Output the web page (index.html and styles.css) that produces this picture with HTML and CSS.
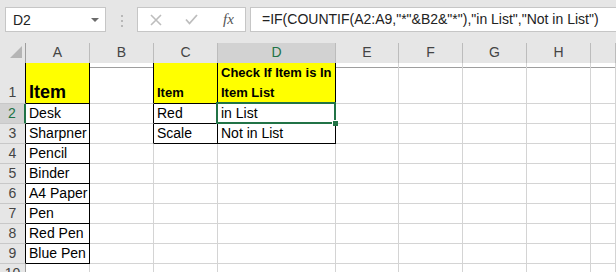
FILE: index.html
```html
<!DOCTYPE html>
<html lang="en">
<head>
    <meta charset="UTF-8">
    <title>COUNTIF Check</title>
    <link rel="stylesheet" href="styles.css">
</head>
<body>
    <div class="toolbar">
        <div class="namebox">
            <span>D2</span>
            <svg class="caret" width="8" height="4" viewBox="0 0 8 4"><path d="M0 0H8L4 4Z" fill="#6b6b6b"/></svg>
        </div>
        <svg class="grip" width="3" height="12" viewBox="0 0 3 12">
            <rect x="0" y="0" width="2" height="2" fill="#b8b8b8"/>
            <rect x="0" y="5" width="2" height="2" fill="#b8b8b8"/>
            <rect x="0" y="10" width="2" height="2" fill="#b8b8b8"/>
        </svg>
        <div class="fxbtns">
            <svg width="12" height="12" viewBox="0 0 12 12"><path d="M1 1L11 11M11 1L1 11" stroke="#bdbdbd" stroke-width="1.6" fill="none"/></svg>
            <svg width="13" height="11" viewBox="0 0 13 11"><path d="M1 5.5L4.5 9.5L12 1" stroke="#bdbdbd" stroke-width="1.8" fill="none"/></svg>
            <span class="fx">fx</span>
        </div>
        <div class="formula">=IF(COUNTIF(A2:A9,"*"&amp;B2&amp;"*"),"in List","Not in List")</div>
    </div>

    <div class="sheet">
        <div class="row head">
            <div class="rh corner">
                <svg width="25" height="19" viewBox="0 0 25 19"><path d="M22 3V15H10Z" fill="#b5b5b5"/></svg>
            </div>
            <div class="ch">A</div>
            <div class="ch">B</div>
            <div class="ch">C</div>
            <div class="ch sel">D</div>
            <div class="ch">E</div>
            <div class="ch">F</div>
            <div class="ch">G</div>
            <div class="ch">H</div>
            <div class="ch"></div>
        </div>

        <div class="row r1">
            <div class="rh edge">1</div>
            <div class="c boxed yellow big">Item</div>
            <div class="c before"></div>
            <div class="c boxed yellow bold">Item</div>
            <div class="c boxed yellow bold">Check If Item is In<br>Item List</div>
            <div class="c"></div>
            <div class="c"></div>
            <div class="c"></div>
            <div class="c"></div>
            <div class="c"></div>
        </div>

        <div class="row">
            <div class="rh active">2</div>
            <div class="c boxed">Desk</div>
            <div class="c before"></div>
            <div class="c boxed">Red</div>
            <div class="c boxed current">in List<span class="selbox"><span class="handle"></span></span></div>
            <div class="c"></div>
            <div class="c"></div>
            <div class="c"></div>
            <div class="c"></div>
            <div class="c"></div>
        </div>

        <div class="row">
            <div class="rh edge">3</div>
            <div class="c boxed">Sharpner</div>
            <div class="c before"></div>
            <div class="c boxed">Scale</div>
            <div class="c boxed">Not in List</div>
            <div class="c"></div>
            <div class="c"></div>
            <div class="c"></div>
            <div class="c"></div>
            <div class="c"></div>
        </div>

        <div class="row">
            <div class="rh edge">4</div>
            <div class="c boxed">Pencil</div>
            <div class="c"></div><div class="c"></div><div class="c"></div><div class="c"></div>
            <div class="c"></div><div class="c"></div><div class="c"></div><div class="c"></div>
        </div>
        <div class="row">
            <div class="rh edge">5</div>
            <div class="c boxed">Binder</div>
            <div class="c"></div><div class="c"></div><div class="c"></div><div class="c"></div>
            <div class="c"></div><div class="c"></div><div class="c"></div><div class="c"></div>
        </div>
        <div class="row">
            <div class="rh edge">6</div>
            <div class="c boxed">A4 Paper</div>
            <div class="c"></div><div class="c"></div><div class="c"></div><div class="c"></div>
            <div class="c"></div><div class="c"></div><div class="c"></div><div class="c"></div>
        </div>
        <div class="row">
            <div class="rh edge">7</div>
            <div class="c boxed">Pen</div>
            <div class="c"></div><div class="c"></div><div class="c"></div><div class="c"></div>
            <div class="c"></div><div class="c"></div><div class="c"></div><div class="c"></div>
        </div>
        <div class="row">
            <div class="rh edge">8</div>
            <div class="c boxed">Red Pen</div>
            <div class="c"></div><div class="c"></div><div class="c"></div><div class="c"></div>
            <div class="c"></div><div class="c"></div><div class="c"></div><div class="c"></div>
        </div>
        <div class="row">
            <div class="rh edge">9</div>
            <div class="c boxed">Blue Pen</div>
            <div class="c"></div><div class="c"></div><div class="c"></div><div class="c"></div>
            <div class="c"></div><div class="c"></div><div class="c"></div><div class="c"></div>
        </div>
        <div class="row">
            <div class="rh">10</div>
            <div class="c"></div><div class="c"></div><div class="c"></div><div class="c"></div><div class="c"></div>
            <div class="c"></div><div class="c"></div><div class="c"></div><div class="c"></div>
        </div>
    </div>
</body>
</html>
```

FILE: styles.css
```css
body {
    margin: 0;
    background: #fff;
    font-family: "Liberation Sans", Arial, sans-serif;
    overflow: hidden;
}

/* formula bar */
.toolbar {
    height: 43px;
    background: #e6e6e6;
    display: flex;
    align-items: flex-start;
    padding: 7px 0 0 5px;
    box-sizing: border-box;
}

.namebox {
    width: 101px;
    height: 25px;
    box-sizing: border-box;
    background: #fff;
    border: 1px solid #c6c6c6;
    display: flex;
    align-items: center;
    justify-content: space-between;
    padding: 0 6px 0 7px;
    font-size: 14px;
    color: #222;
}

.caret {
    margin-top: 1px;
}

.grip {
    margin: 8px 0 0 15px;
}

.fxbtns {
    margin-left: 13px;
    width: 109px;
    height: 25px;
    box-sizing: border-box;
    background: #fff;
    border: 1px solid #c6c6c6;
    display: flex;
    align-items: center;
    padding: 0 0 0 12px;
    gap: 23px;
}

.fx {
    font-family: "Liberation Serif", serif;
    font-style: italic;
    font-size: 15px;
    color: #555;
    margin-left: 2px;
}

.formula {
    margin-left: 4px;
    flex: 1;
    height: 25px;
    box-sizing: border-box;
    background: #fff;
    border: 1px solid #c6c6c6;
    border-right: none;
    padding-left: 11px;
    font-size: 14px;
    line-height: 23px;
    color: #222;
    white-space: nowrap;
}

/* grid */
.row {
    display: grid;
    grid-template-columns: 26px 64px 64px 64px 118px 63px 64px 64px 64px 1fr;
    height: 20px;
}

.row > div {
    box-sizing: border-box;
    border-right: 1px solid #d4d4d4;
    border-bottom: 1px solid #d4d4d4;
}

.head {
    background: #e6e6e6;
}

.head > div {
    border-right-color: #bcbcbc;
    border-bottom-color: #9e9e9e;
}

.ch {
    text-align: center;
    font-size: 14px;
    line-height: 19px;
    color: #444;
}

.ch.sel {
    background: #d2d2d2;
    color: #217346;
    border-bottom: 2px solid #217346 !important;
    line-height: 18px;
}

.corner {
    line-height: 0;
}

.rh {
    background: #e6e6e6;
    text-align: center;
    font-size: 14px;
    line-height: 19px;
    color: #444;
    border-right-color: #9e9e9e !important;
    border-bottom-color: #c8c8c8 !important;
}

.rh.edge {
    border-right-color: #000 !important;
}

.rh.active {
    background: #d2d2d2;
    color: #217346;
    border-right: 2px solid #217346 !important;
}

.r1 {
    height: 41px;
}

.r1 > div {
    display: flex;
    align-items: flex-end;
}

.r1 .rh {
    justify-content: center;
    padding-bottom: 1px;
}

.c {
    font-size: 14px;
    line-height: 19px;
    padding-left: 3px;
    color: #000;
    white-space: nowrap;
}

.boxed {
    border-right-color: #000 !important;
    border-bottom-color: #000 !important;
}

.before {
    border-right-color: #000 !important;
}

.yellow {
    background: #ffff00;
}

.bold {
    font-weight: bold;
    font-size: 13px;
    line-height: 20px;
}

.big {
    font-weight: bold;
    font-size: 18px;
    line-height: 20px;
    padding-bottom: 1px;
}

.current {
    position: relative;
}

.selbox {
    position: absolute;
    left: -2px;
    top: -2px;
    right: -1px;
    bottom: -1px;
    border: 2px solid #217346;
}

.handle {
    position: absolute;
    right: -4px;
    bottom: -4px;
    width: 5px;
    height: 5px;
    background: #217346;
    border: 1px solid #fff;
    border-right: none;
    border-bottom: none;
}
```
